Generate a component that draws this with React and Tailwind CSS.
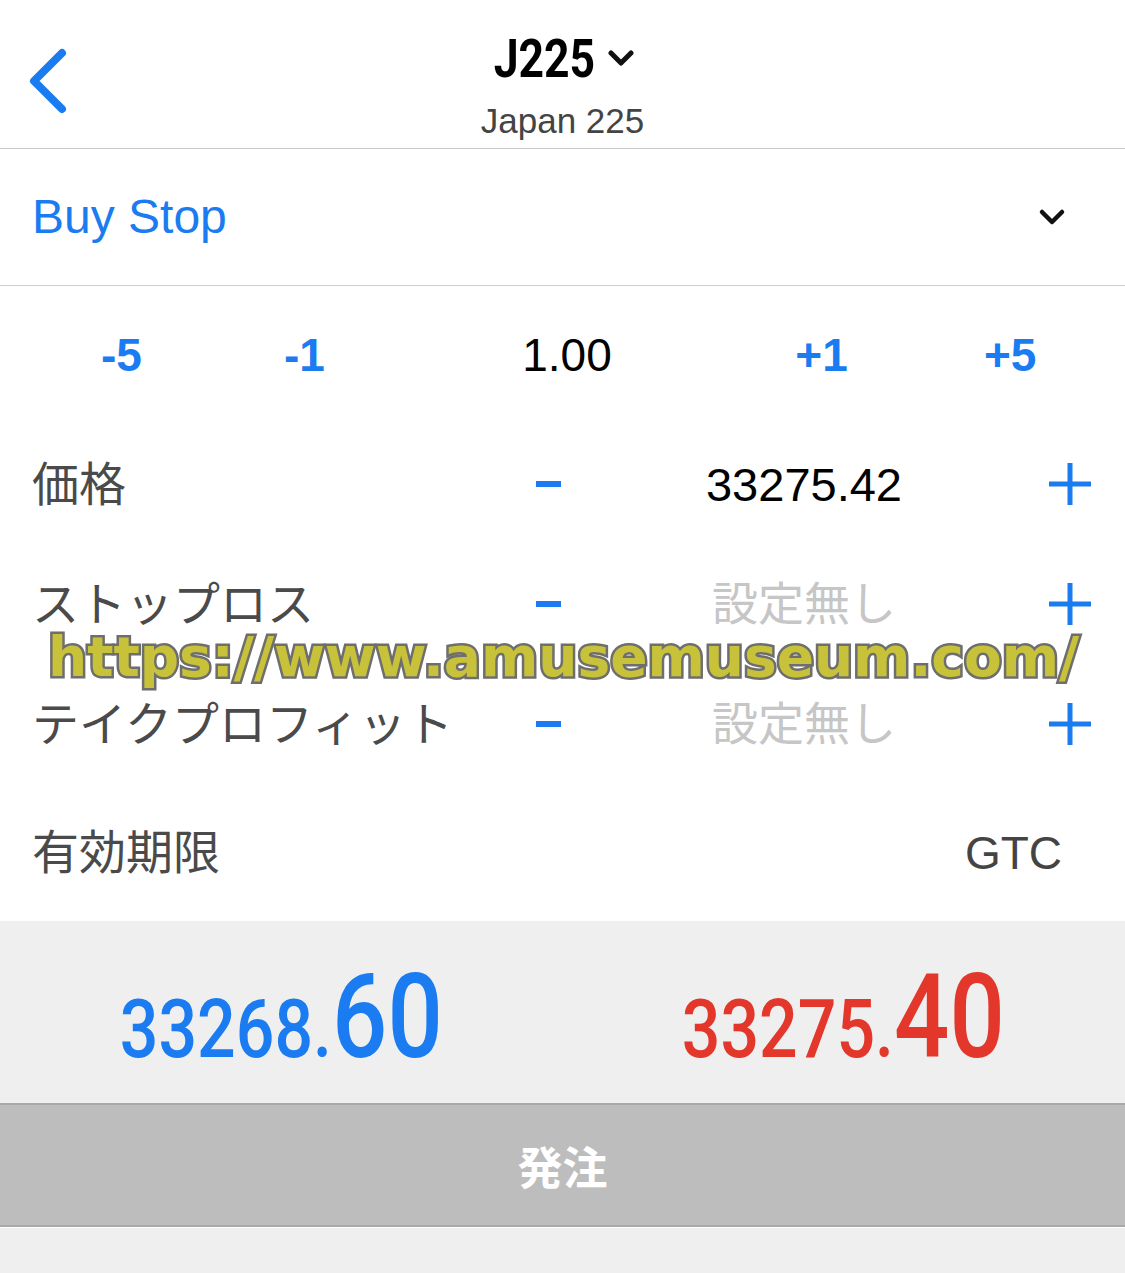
import React from "react";

const BLUE = "text-[#1a7cf0]";

function Minus() {
	return <div className="w-[25px] h-[6px] bg-[#1a7cf0]" />;
}

function Plus() {
	return (
		<svg width="42" height="42" viewBox="0 0 42 42">
			<path d="M21 0V42M0 21H42" stroke="#1a7cf0" strokeWidth="5" />
		</svg>
	);
}

function FieldRow({ label, value, placeholder }) {
	return (
		<div className="h-[120px] grid grid-cols-[490px_116px_396px_123px] items-center">
			<div className="pl-8 mb-[8px] text-[47px] text-[#4a4a4a] font-['Noto_Sans_CJK_JP',sans-serif] leading-none">{label}</div>
			<div className="flex justify-center"><Minus /></div>
			<div
				className={`text-center leading-none ${
					placeholder
						? "mb-[8px] text-[46px] text-[#c6c6c6] font-['Noto_Sans_CJK_JP',sans-serif]"
						: "text-[47px] text-black font-['Liberation_Sans',sans-serif]"
				}`}
			>
				{value}
			</div>
			<div className="pl-[47px] flex"><Plus /></div>
		</div>
	);
}

// condensed quote, squeezed horizontally (no condensed face installed)
function Quote({ head, tail, color }) {
	return (
		<div className="w-full flex justify-center pt-[10px]">
			<div className={`flex items-baseline leading-none font-medium scale-x-[0.84] whitespace-nowrap ${color}`}>
				<span className="text-[81px]">{head}</span>
				<span className="text-[116px]">{tail}</span>
			</div>
		</div>
	);
}

export default function App() {
	return (
		<div className="relative w-[1125px] h-[1273px] flex flex-col bg-white font-['Liberation_Sans',sans-serif]">
			{/* Header */}
			<div className="relative h-[149px] border-b border-[#c8c8c8] flex flex-col items-center">
				<div className="absolute left-[26px] top-[48px]">
					<svg width="44" height="66" viewBox="0 0 44 66">
						<path d="M36 5L8 33L36 61" fill="none" stroke="#1a7cf0" strokeWidth="8" strokeLinecap="round" strokeLinejoin="round" />
					</svg>
				</div>
				<div className="mt-[33px] flex items-center gap-[13px] pl-[2px]">
					<span className="w-[101px] flex justify-center">
						<span className="inline-block scale-x-[0.84] whitespace-nowrap text-[53px] leading-none font-bold text-black font-['Roboto',sans-serif]">J225</span>
					</span>
					<svg width="26" height="18" viewBox="0 0 26 18" className="-mt-[4px]">
						<path d="M3 4L13 14L23 4" fill="none" stroke="#111" strokeWidth="5" strokeLinecap="round" strokeLinejoin="round" />
					</svg>
				</div>
				<div className="mt-[17px] text-[35px] leading-none text-[#444]">Japan 225</div>
			</div>

			{/* Order type */}
			<div className="h-[137px] border-b border-[#cfcfcf] flex items-center justify-between pl-8 pr-[59px]">
				<span className={`text-[48px] leading-none ${BLUE}`}>Buy Stop</span>
				<svg width="28" height="20" viewBox="0 0 28 20">
					<path d="M4 5L14 15L24 5" fill="none" stroke="#111" strokeWidth="4.5" strokeLinecap="round" strokeLinejoin="round" />
				</svg>
			</div>

			{/* Volume */}
			<div className="h-[138px] flex items-center text-[46px] leading-none">
				<div className={`w-[243px] shrink-0 text-center font-semibold ${BLUE}`}>-5</div>
				<div className={`w-[123px] shrink-0 text-center font-semibold ${BLUE}`}>-1</div>
				<div className="w-[402px] shrink-0 text-center text-black">1.00</div>
				<div className={`w-[107px] shrink-0 text-center font-semibold ${BLUE}`}>+1</div>
				<div className={`flex-1 pl-[109px] font-semibold ${BLUE}`}>+5</div>
			</div>

			<FieldRow label="価格" value="33275.42" />
			<FieldRow label="ストップロス" value="設定無し" placeholder />
			<FieldRow label="テイクプロフィット" value="設定無し" placeholder />

			{/* Expiry */}
			<div className="h-[137px] flex items-center justify-between pl-8 pr-[63px]">
				<span className="mb-[8px] text-[47px] leading-none text-[#4a4a4a] font-['Noto_Sans_CJK_JP',sans-serif]">有効期限</span>
				<span className="text-[46px] leading-none text-[#444]">GTC</span>
			</div>

			{/* Quotes */}
			<div className="h-[182px] bg-[#efefef] grid grid-cols-2 items-center font-['Roboto',sans-serif]">
				<Quote head="33268." tail="60" color="text-[#1a7cf0]" />
				<Quote head="33275." tail="40" color="text-[#e2372a]" />
			</div>

			{/* Submit */}
			<div className="h-[124px] bg-[#bdbdbd] border-y-2 border-[#a9a9a9] flex items-center justify-center">
				<span className="text-[45px] leading-none font-bold text-white font-['Noto_Sans_CJK_JP',sans-serif]">発注</span>
			</div>
			<div className="flex-1 bg-[#efefef] border-t border-white" />

			{/* Watermark overlay */}
			<div className="absolute left-[48px] top-[630px] text-[55px] leading-none font-bold text-[#c7c23a] font-['DejaVu_Sans',sans-serif] [-webkit-text-stroke:5px_#6e6e6e] [paint-order:stroke_fill] pointer-events-none whitespace-nowrap">
				https://www.amusemuseum.com/
			</div>
		</div>
	);
}
